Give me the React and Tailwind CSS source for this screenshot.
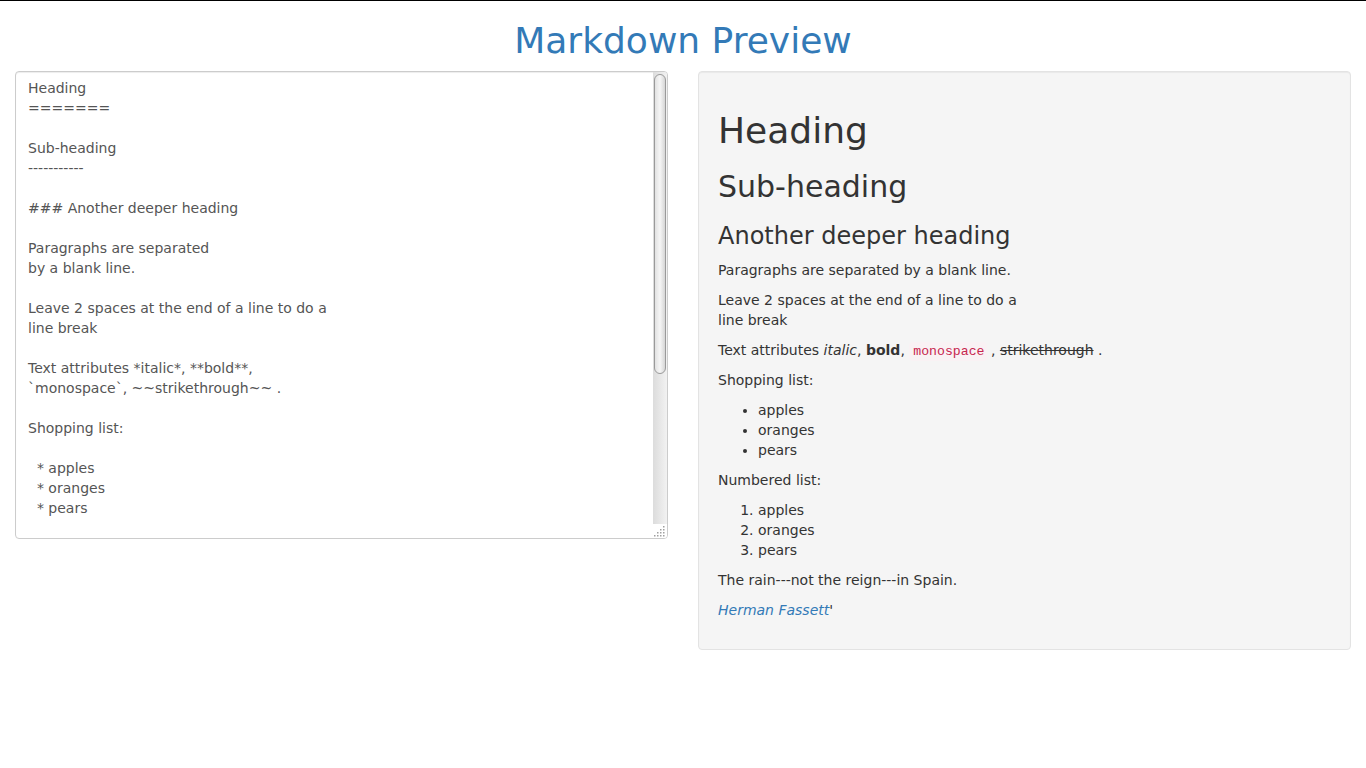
import React from "react";

const source = `Heading
=======

Sub-heading
-----------

### Another deeper heading

Paragraphs are separated
by a blank line.

Leave 2 spaces at the end of a line to do a
line break

Text attributes *italic*, **bold**,
\`monospace\`, ~~strikethrough~~ .

Shopping list:

  * apples
  * oranges
  * pears

Numbered list:

  1. apples
  2. oranges
  3. pears

The rain---not the reign---in Spain.

 *[Herman Fassett](https://freecodecamp.com/hermanfassett)*`;

function Grip() {
  const dots = [
    [10, 2],
    [7, 5], [10, 5],
    [4, 8], [7, 8], [10, 8],
    [1, 11], [4, 11], [7, 11], [10, 11],
  ];
  return (
    <svg width="14" height="14" viewBox="0 0 14 14">
      {dots.map(([x, y], i) => (
        <rect key={i} x={x} y={y} width="1.5" height="1.5" fill="#a0a0a0" />
      ))}
    </svg>
  );
}

export default function App() {
  return (
    <div
      className="min-h-[768px] bg-white border-t border-black"
      style={{ fontFamily: '"DejaVu Sans", sans-serif' }}
    >
      <h1 className="mt-5 mb-2.5 text-center text-[36px] leading-[1.1] text-[#337ab7] font-normal">
        Markdown Preview
      </h1>
      <div className="grid grid-cols-2">
        <div className="px-[15px]">
          <div className="flex h-[468px] rounded border border-[#ccc] bg-white shadow-[inset_0_1px_1px_rgba(0,0,0,0.075)] overflow-hidden">
            <div className="flex-1 overflow-hidden px-3 py-1.5 text-[14px] leading-5 text-[#555] whitespace-pre-wrap">
              {source}
            </div>
            <div className="w-[14px] flex flex-col">
              <div className="flex-1 bg-gradient-to-r from-[#dcdcdc] to-[#f2f2f2] pt-[2px] px-[1px]">
                <div className="h-[300px] rounded-full border border-[#9a9a9a] bg-gradient-to-r from-[#e2e2e2] via-[#f6f6f6] to-[#d6d6d6]" />
              </div>
              <div className="h-[14px] bg-white">
                <Grip />
              </div>
            </div>
          </div>
        </div>
        <div className="px-[15px]">
          <div className="rounded border border-[#e3e3e3] bg-[#f5f5f5] p-[19px] shadow-[inset_0_1px_1px_rgba(0,0,0,0.05)] text-[14px] leading-5 text-[#333]">
            <h1 className="mt-5 mb-2.5 text-[36px] leading-[1.1] font-normal">Heading</h1>
            <h2 className="mt-5 mb-2.5 text-[30px] leading-[1.1] font-normal">Sub-heading</h2>
            <h3 className="mt-5 mb-2.5 text-[24px] leading-[1.1] font-normal">Another deeper heading</h3>
            <p className="mb-2.5">Paragraphs are separated by a blank line.</p>
            <p className="mb-2.5">
              Leave 2 spaces at the end of a line to do a
              <br />
              line break
            </p>
            <p className="mb-2.5 h-5">
              Text attributes <em>italic</em>, <strong>bold</strong>,{" "}
              <code
                className="rounded bg-[#f9f2f4] pl-1 pr-0.5 py-0.5 text-[13.2px] leading-none text-[#c7254e]"
                style={{ fontFamily: '"Liberation Mono", monospace' }}
              >
                monospace
              </code>{" "}
              , <del>strikethrough</del> .
            </p>
            <p className="mb-2.5">Shopping list:</p>
            <ul className="mb-2.5 list-disc pl-10">
              <li>apples</li>
              <li>oranges</li>
              <li>pears</li>
            </ul>
            <p className="mb-2.5">Numbered list:</p>
            <ol className="mb-2.5 list-decimal pl-10">
              <li>apples</li>
              <li>oranges</li>
              <li>pears</li>
            </ol>
            <p className="mb-2.5">The rain---not the reign---in Spain.</p>
            <p className="mb-2.5">
              <em>
                <a href="#" className="text-[#337ab7]">Herman Fassett</a>
              </em>
              '
            </p>
          </div>
        </div>
      </div>
    </div>
  );
}
